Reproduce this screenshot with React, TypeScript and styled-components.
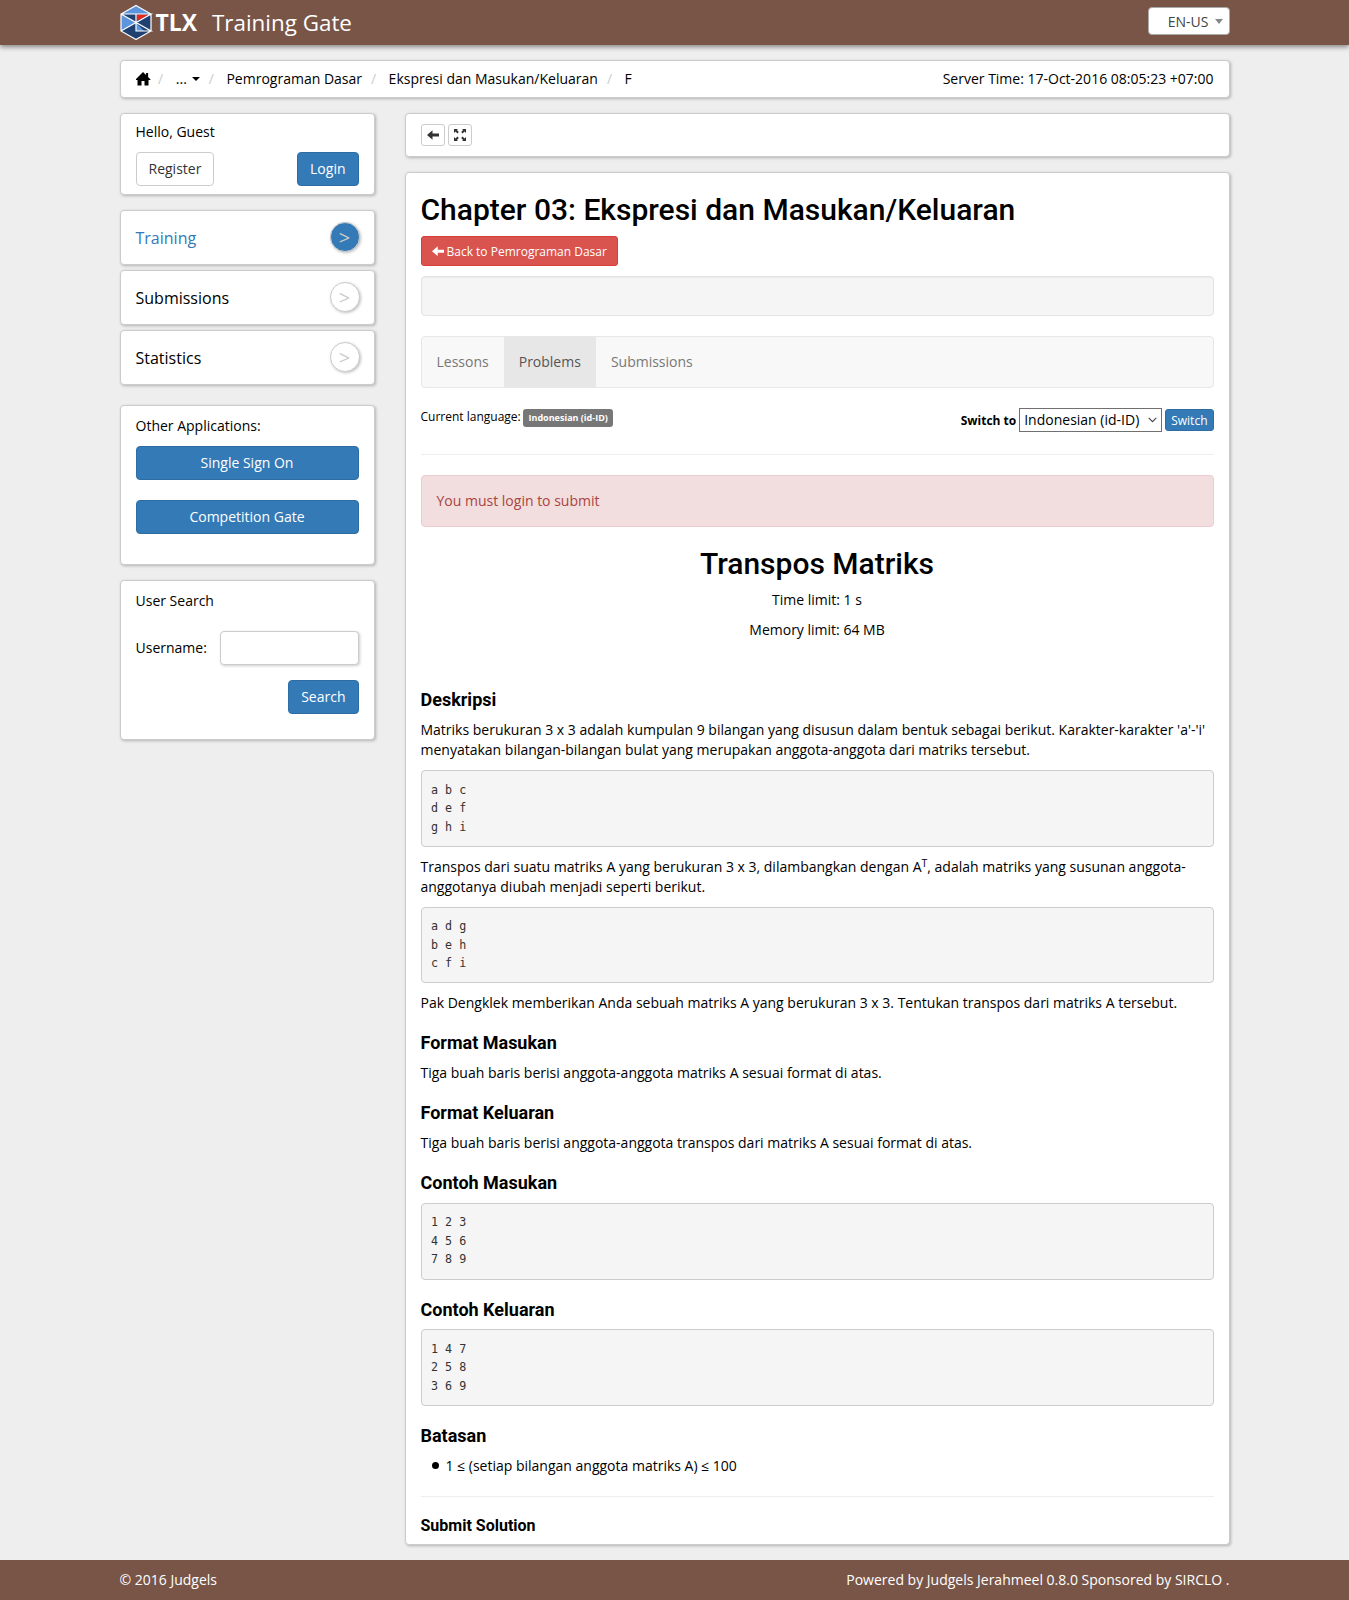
import React from "react";
import styled, { createGlobalStyle, css } from "styled-components";

const Global = createGlobalStyle`
  *, *::before, *::after { box-sizing: border-box; }
  body {
    margin: 0;
    background: #eee;
    color: #000;
    font-family: "Open Sans", "Noto Sans", sans-serif;
    font-size: 14px;
    line-height: 20px;
  }
  button, input { font-family: inherit; }
`;

const Page = styled.div`
  display: flex;
  flex-direction: column;
  height: 1600px;
`;

const Wrap = styled.div`
  width: 1110px;
  margin: 0 auto;
`;

const Header = styled.header`
  height: 45px;
  flex: none;
  background: #795548;
  box-shadow: 0 2px 5px rgba(0, 0, 0, 0.45);
`;

const HeaderRow = styled(Wrap)`
  display: flex;
  align-items: flex-start;
  height: 45px;
`;

const Brand = styled.a`
  display: flex;
  align-items: center;
  height: 44px;
  color: #fff;
  font-size: 22.4px;
`;

const BrandName = styled.span`
  margin: 1px 0 0 12.5px;
`;

const LocaleSelect = styled.div`
  display: flex;
  align-items: center;
  justify-content: flex-end;
  gap: 6px;
  width: 82px;
  height: 28px;
  margin: 7px 0 0 auto;
  padding: 1px 6px 0 0;
  border: 1px solid #aaa;
  border-radius: 4px;
  background: #fff;
  color: #444;
`;

const Triangle = styled.span<{ $w: number; $h: number; $color: string }>`
  display: inline-block;
  border-style: solid;
  border-color: ${(p) => p.$color} transparent transparent;
  border-width: ${(p) => `${p.$h}px ${p.$w}px 0`};
`;

const Card = styled.section`
  border: 1px solid #ccc;
  border-radius: 4px;
  background: #fff;
  box-shadow: 1px 1px 3px rgba(0, 0, 0, 0.25);
`;

const Crumbs = styled(Card)`
  display: flex;
  align-items: center;
  height: 38px;
  margin-top: 15px;
  padding: 0 15px;
`;

const Sep = styled.span<{ $tight?: boolean }>`
  width: ${(p) => (p.$tight ? "25.3px" : "26.6px")};
  padding-left: ${(p) => (p.$tight ? "7.5px" : "9px")};
  color: #ccc;
`;

const Dropdown = styled.span`
  display: flex;
  align-items: center;
  gap: 5px;
`;

const ServerTime = styled.span`
  margin-left: auto;
`;

const Columns = styled.div`
  display: flex;
  align-items: flex-start;
  gap: 30px;
  margin-top: 15px;
`;

const Sidebar = styled.aside`
  width: 255px;
`;

const Main = styled.main`
  width: 825px;
`;

const btnColors = {
  default: ["#fff", "#ccc", "#333"],
  primary: ["#337ab7", "#2e6da4", "#fff"],
  danger: ["#d9534f", "#d43f3a", "#fff"],
};
const btnSizes = {
  md: css`height: 34px; padding: 0 12px 2px; font-size: 14px; border-radius: 4px;`,
  sm: css`height: 30px; padding: 0 10px; font-size: 12px; border-radius: 3px;`,
  xs: css`height: 22px; padding: 0 5px; font-size: 12px; border-radius: 3px;`,
};

const Button = styled.button<{
  $kind: keyof typeof btnColors;
  $size?: keyof typeof btnSizes;
  $block?: boolean;
}>`
  display: inline-flex;
  align-items: center;
  justify-content: center;
  gap: 2.5px;
  white-space: nowrap;
  border: 1px solid ${(p) => btnColors[p.$kind][1]};
  background: ${(p) => btnColors[p.$kind][0]};
  color: ${(p) => btnColors[p.$kind][2]};
  ${(p) => btnSizes[p.$size ?? "md"]}
  ${(p) => p.$block && "width: 100%;"}
`;

const Greeting = styled(Card)`
  height: 82px;
  padding: 8px 15px 0;
`;

const Spread = styled.div`
  display: flex;
  justify-content: space-between;
  margin-top: 10px;
`;

const Menu = styled.nav`
  display: flex;
  flex-direction: column;
  gap: 5px;
  margin: 15px 0 20px;
`;

const MenuItem = styled(Card)<{ $active?: boolean }>`
  display: flex;
  align-items: center;
  justify-content: space-between;
  height: 55px;
  padding: 0 14px 0 15px;
  font-size: 16px;
  color: ${(p) => (p.$active ? "#337ab7" : "#000")};
`;

const Round = styled.span<{ $active?: boolean }>`
  width: 30px;
  height: 30px;
  margin-top: -1px;
  border: 1px solid #ccc;
  border-radius: 50%;
  background: ${(p) => (p.$active ? "#337ab7" : "#fff")};
  box-shadow: 1px 1px 3px rgba(0, 0, 0, 0.25);
  color: #ccc;
  font-size: 20px;
  line-height: 30px;
  text-align: center;
`;

const Widget = styled(Card)`
  display: flex;
  flex-direction: column;
  height: 160px;
  padding: 10px 15px 0;
  margin-bottom: 15px;
`;

const AppLinks = styled.div`
  display: grid;
  gap: 20px;
  margin-top: 10px;
`;

const Field = styled.label`
  display: flex;
  align-items: center;
  justify-content: space-between;
  margin-top: 20px;
`;

const TextInput = styled.input`
  width: 139px;
  height: 34px;
  border: 1px solid #ccc;
  border-radius: 4px;
  background: #fff;
  box-shadow: 1px 1px 3px rgba(0, 0, 0, 0.2);
`;

const Actions = styled.div`
  display: flex;
  justify-content: flex-end;
  margin-top: 15px;
`;

const Toolbar = styled(Card)`
  display: flex;
  gap: 3px;
  height: 44px;
  padding: 10px 15px;
  margin-bottom: 15px;
`;

const IconButton = styled(Button)`
  width: 24px;
`;

const Content = styled(Card)`
  height: 1373px;
  padding: 20px 15px 0;
`;

const Title = styled.h2<{ $center?: boolean }>`
  margin: 0 0 10px;
  font: 500 30px/33px Roboto, sans-serif;
  text-align: ${(p) => (p.$center ? "center" : "left")};
`;

const Well = styled.div`
  height: 40px;
  margin: 10px 0 20px;
  border: 1px solid #e3e3e3;
  border-radius: 4px;
  background: #f5f5f5;
  box-shadow: inset 0 1px 1px rgba(0, 0, 0, 0.05);
`;

const Tabs = styled.nav`
  display: flex;
  height: 52px;
  margin-bottom: 20px;
  border: 1px solid #e7e7e7;
  border-radius: 4px;
  background: #f8f8f8;
`;

const Tab = styled.a<{ $active?: boolean }>`
  padding: 15px;
  color: ${(p) => (p.$active ? "#555" : "#777")};
  background: ${(p) => (p.$active ? "#e7e7e7" : "transparent")};
`;

const LangRow = styled.div`
  display: flex;
  justify-content: space-between;
  align-items: flex-start;
  height: 26px;
  font-size: 12px;
  line-height: 17px;
`;

const Inline = styled.div`
  display: flex;
  align-items: center;
  gap: 3px;
`;

const CurrentLanguage = styled.div`
  display: flex;
  align-items: flex-start;
  gap: 2.4px;
`;

const Badge = styled.span`
  height: 18px;
  margin-top: 1px;
  padding: 0 5.4px;
  border-radius: 3px;
  background: #777;
  color: #fff;
  font-size: 9px;
  font-weight: 700;
  line-height: 18px;
`;

const LangSelect = styled.div`
  display: flex;
  align-items: center;
  justify-content: space-between;
  width: 143px;
  height: 24px;
  padding: 0 4px 1px;
  border: 1px solid #707070;
  background: #fff;
  font-size: 14px;
`;

const Rule = styled.hr`
  height: 1px;
  margin: 20px 0;
  border: 0;
  background: #eee;
`;

const Alert = styled.div`
  height: 52px;
  margin-bottom: 20px;
  padding: 15px;
  border: 1px solid #ebccd1;
  border-radius: 4px;
  background: #f2dede;
  color: #a94442;
`;

const Limits = styled.div`
  margin-bottom: 50.3px;
  text-align: center;
`;

const P = styled.p`
  margin: 0 0 10px;
`;

const Sup = styled.sup`
  position: relative;
  top: -0.5em;
  font-size: 75%;
  line-height: 0;
  vertical-align: baseline;
`;

const Heading = styled.h3<{ $small?: boolean }>`
  margin: 20px 0 10px;
  font: 700 ${(p) => (p.$small ? "16px" : "18px")}/1.1 Roboto, sans-serif;
`;

const Pre = styled.pre`
  margin: 0 0 10px;
  padding: 9.5px;
  border: 1px solid #ccc;
  border-radius: 4px;
  background: #f5f5f5;
  color: #333;
  font: 11.7px/18.57px "DejaVu Sans Mono", monospace;
`;

const List = styled.ul`
  margin: 0;
  padding: 0 0 0 11px;
  list-style: none;
`;

const Item = styled.li`
  display: flex;
  align-items: center;
  gap: 7px;
  &::before {
    content: "";
    width: 7px;
    height: 7px;
    border-radius: 50%;
    background: #000;
  }
`;

const Footer = styled.footer`
  height: 40px;
  margin-top: 15px;
  flex: none;
  background: #795548;
  color: #fff;
`;

const FooterRow = styled(Wrap)`
  display: flex;
  justify-content: space-between;
  padding-top: 10px;
`;

const Logo = () => (
  <svg width="80" height="36" viewBox="0 0 80 36">
    <path d="M16 1.5 31 10V27L16 35.5 1 27V10Z" fill="#1f4172" />
    <path d="M16 1.5 31 10H1ZM1 10 16 18.5 1 27ZM16 18.5 24 27H16Z" fill="#5c95dd" />
    <path d="M16.5 10.5H29L16.5 17Z" fill="#e8261c" />
    <path
      d="M16 1.5 31 10V27L16 35.5 1 27V10ZM1 10H31L1 27M1 10 31 27H16V10"
      fill="none"
      stroke="#fff"
      strokeWidth="1.2"
    />
    <text x="35.5" y="27" fill="#fff" fontFamily="Open Sans, sans-serif" fontWeight="700" fontSize="23.5" textLength="41.5" lengthAdjust="spacingAndGlyphs">
      TLX
    </text>
  </svg>
);

const HomeIcon = () => (
  <svg width="15" height="14" viewBox="0.5 0 15 14">
    <path d="M7.5 0 10.6 3V1H12.6V5L15 7.5V8H13V13.5H9V9H6V13.5H2V8H0V7.5Z" fill="#000" overflow="visible" />
  </svg>
);

const ArrowLeft = ({ size = 12 }: { size?: number }) => (
  <svg width={size} height={(size * 10) / 12} viewBox="0 0 12 10">
    <path d="M0 5 5.5 .3V3.5H12V6.5H5.5V9.7Z" fill="currentColor" />
  </svg>
);

const Fullscreen = () => (
  <svg width="12" height="12" viewBox="0 0 12 12">
    <path
      d="M0 0H4L2.9 1.1 4.8 3 3.4 4.4 1.5 2.5 0 4ZM12 0V4L10.5 2.5 8.6 4.4 7.2 3 9.1 1.1 8 0ZM0 12V8L1.5 9.5 3.4 7.6 4.8 9 2.9 10.9 4 12ZM12 12H8L9.1 10.9 7.2 9 8.6 7.6 10.5 9.5 12 8Z"
      fill="currentColor"
    />
  </svg>
);

const Chevron = () => (
  <svg width="9" height="6" viewBox="0 0 9 6">
    <path d="M.7 .8 4.5 4.6 8.3 .8" fill="none" stroke="#444" strokeWidth="1.1" />
  </svg>
);

const menu = ["Training", "Submissions", "Statistics"];

export default function App() {
  return (
    <Page>
      <Global />
      <Header>
        <HeaderRow>
          <Brand>
            <Logo />
            <BrandName>Training Gate</BrandName>
          </Brand>
          <LocaleSelect>
            EN-US <Triangle $w={4} $h={5} $color="#888" />
          </LocaleSelect>
        </HeaderRow>
      </Header>
      <Wrap>
        <Crumbs>
          <HomeIcon />
          <Sep $tight>/</Sep>
          <Dropdown>
            ... <Triangle $w={4} $h={4} $color="#000" />
          </Dropdown>
          <Sep>/</Sep>
          <span>Pemrograman Dasar</span>
          <Sep>/</Sep>
          <span>Ekspresi dan Masukan/Keluaran</span>
          <Sep>/</Sep>
          <span>F</span>
          <ServerTime>Server Time: 17-Oct-2016 08:05:23 +07:00</ServerTime>
        </Crumbs>
        <Columns>
          <Sidebar>
            <Greeting>
              <div>Hello, Guest</div>
              <Spread>
                <Button $kind="default">Register</Button>
                <Button $kind="primary">Login</Button>
              </Spread>
            </Greeting>
            <Menu>
              {menu.map((name, i) => (
                <MenuItem key={name} $active={i === 0}>
                  <span>{name}</span>
                  <Round $active={i === 0}>&gt;</Round>
                </MenuItem>
              ))}
            </Menu>
            <Widget>
              <div>Other Applications:</div>
              <AppLinks>
                <Button $kind="primary" $block>Single Sign On</Button>
                <Button $kind="primary" $block>Competition Gate</Button>
              </AppLinks>
            </Widget>
            <Widget>
              <div>User Search</div>
              <Field>
                Username:
                <TextInput />
              </Field>
              <Actions>
                <Button $kind="primary">Search</Button>
              </Actions>
            </Widget>
          </Sidebar>
          <Main>
            <Toolbar>
              <IconButton $kind="default" $size="xs"><ArrowLeft /></IconButton>
              <IconButton $kind="default" $size="xs"><Fullscreen /></IconButton>
            </Toolbar>
            <Content>
              <Title>Chapter 03: Ekspresi dan Masukan/Keluaran</Title>
              <Button $kind="danger" $size="sm">
                <ArrowLeft size={12.5} />
                Back to Pemrograman Dasar
              </Button>
              <Well />
              <Tabs>
                <Tab>Lessons</Tab>
                <Tab $active>Problems</Tab>
                <Tab>Submissions</Tab>
              </Tabs>
              <LangRow>
                <CurrentLanguage>
                  Current language: <Badge>Indonesian (id-ID)</Badge>
                </CurrentLanguage>
                <Inline>
                  <b>Switch to</b>
                  <LangSelect>
                    Indonesian (id-ID) <Chevron />
                  </LangSelect>
                  <Button $kind="primary" $size="xs">Switch</Button>
                </Inline>
              </LangRow>
              <Rule />
              <Alert>You must login to submit</Alert>
              <Title $center>Transpos Matriks</Title>
              <Limits>
                <P>Time limit: 1 s</P>
                <P>Memory limit: 64 MB</P>
              </Limits>
              <Heading>Deskripsi</Heading>
              <P>
                Matriks berukuran 3 x 3 adalah kumpulan 9 bilangan yang disusun dalam bentuk sebagai berikut. Karakter-karakter 'a'-'i'
                menyatakan bilangan-bilangan bulat yang merupakan anggota-anggota dari matriks tersebut.
              </P>
              <Pre>{"a b c\nd e f\ng h i"}</Pre>
              <P>
                Transpos dari suatu matriks A yang berukuran 3 x 3, dilambangkan dengan A<Sup>T</Sup>, adalah matriks yang susunan
                anggota-anggotanya diubah menjadi seperti berikut.
              </P>
              <Pre>{"a d g\nb e h\nc f i"}</Pre>
              <P>Pak Dengklek memberikan Anda sebuah matriks A yang berukuran 3 x 3. Tentukan transpos dari matriks A tersebut.</P>
              <Heading>Format Masukan</Heading>
              <P>Tiga buah baris berisi anggota-anggota matriks A sesuai format di atas.</P>
              <Heading>Format Keluaran</Heading>
              <P>Tiga buah baris berisi anggota-anggota transpos dari matriks A sesuai format di atas.</P>
              <Heading>Contoh Masukan</Heading>
              <Pre>{"1 2 3\n4 5 6\n7 8 9"}</Pre>
              <Heading>Contoh Keluaran</Heading>
              <Pre>{"1 4 7\n2 5 8\n3 6 9"}</Pre>
              <Heading>Batasan</Heading>
              <List>
                <Item>1 ≤ (setiap bilangan anggota matriks A) ≤ 100</Item>
              </List>
              <Rule />
              <Heading $small>Submit Solution</Heading>
            </Content>
          </Main>
        </Columns>
      </Wrap>
      <Footer>
        <FooterRow>
          <span>© 2016 Judgels</span>
          <span>Powered by Judgels Jerahmeel 0.8.0 Sponsored by SIRCLO .</span>
        </FooterRow>
      </Footer>
    </Page>
  );
}
